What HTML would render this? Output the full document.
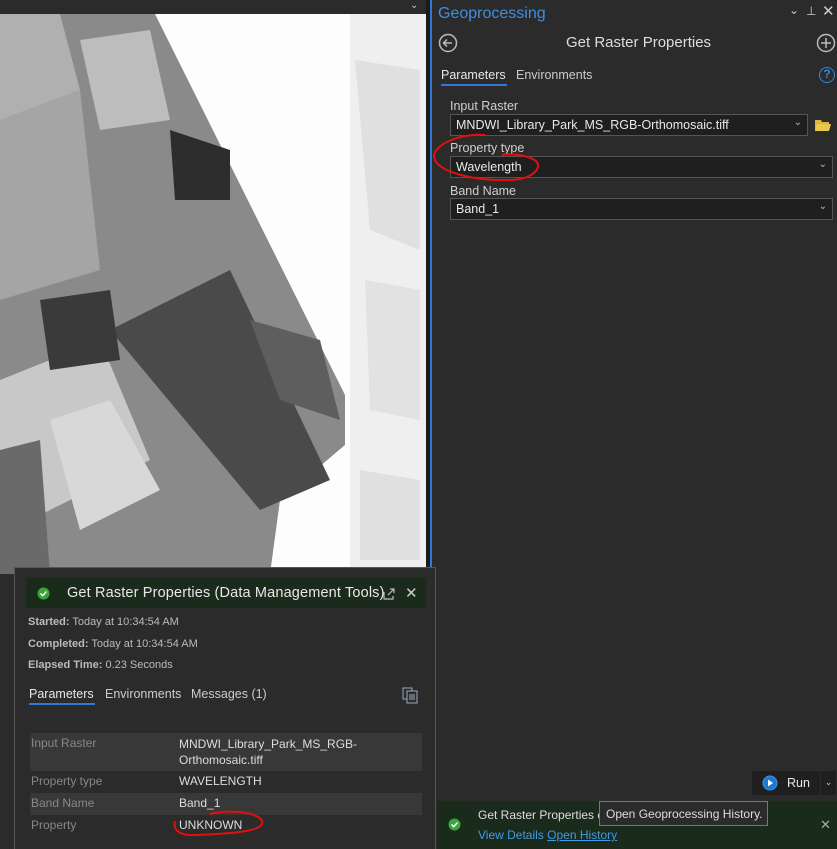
<!DOCTYPE html>
<html><head><meta charset="utf-8"><style>
*{margin:0;padding:0;box-sizing:border-box}
body{width:837px;height:849px;overflow:hidden;background:#2b2b2b;font-family:"Liberation Sans",sans-serif;position:relative;color:#ddd}
.abs{position:absolute}
.field{position:absolute;background:#1f1f1f;border:1px solid #555;height:22px;font-size:12.5px;color:#e8e8e8;padding:3px 5px;}
.chev{position:absolute;right:5px;top:2px;font-size:10px;color:#bbb}
.lbl{position:absolute;font-size:12.5px;color:#cfcfcf}
</style></head><body>
<div class="abs" style="left:0;top:0;width:428px;height:14px;background:#2b2b2b"></div>
<div class="abs" style="left:410px;top:0;font-size:10px;color:#ccc">⌄</div>
<svg class="abs" style="left:0;top:14px" width="426" height="560" viewBox="0 14 426 560">
<rect x="0" y="14" width="426" height="560" fill="#fdfdfd"/>
<rect x="350" y="14" width="76" height="560" fill="#efefef"/>
<polygon points="355,60 420,70 420,250 370,230" fill="#e0e0e0"/>
<polygon points="365,280 420,290 420,420 370,410" fill="#e2e2e2"/>
<polygon points="360,470 420,480 420,560 360,560" fill="#e0e0e0"/>
<polygon points="0,14 155,14 345,395 345,445 280,500 270,574 0,574" fill="#8a8a8a"/>
<polygon points="0,14 60,14 80,90 0,120" fill="#b0b0b0"/>
<polygon points="0,120 80,90 100,270 0,300" fill="#a5a5a5"/>
<polygon points="110,330 230,270 330,480 260,510" fill="#4a4a4a"/>
<polygon points="170,130 230,150 230,200 175,200" fill="#2d2d2d"/>
<polygon points="0,380 100,340 150,460 30,520 0,520" fill="#c8c8c8"/>
<polygon points="50,420 110,400 160,490 80,530" fill="#d8d8d8"/>
<polygon points="0,450 40,440 50,574 0,574" fill="#6a6a6a"/>
<polygon points="80,40 150,30 170,120 100,130" fill="#bdbdbd"/>
<polygon points="40,300 110,290 120,360 50,370" fill="#3a3a3a"/>
<polygon points="250,320 320,340 340,420 280,400" fill="#5e5e5e"/>
</svg>
<div class="abs" style="left:426px;top:0;width:4px;height:849px;background:#1a1a1a"></div>
<div class="abs" style="left:430px;top:0;width:2px;height:849px;background:#2c7ad6"></div>
<div class="abs" style="left:438px;top:5px;font-size:16px;color:#3f8fe0">Geoprocessing</div>
<div class="abs" style="left:789px;top:3px;font-size:12px;color:#ccc">⌄</div>
<div class="abs" style="left:806px;top:4px;font-size:12px;color:#ccc">⊥</div>
<div class="abs" style="left:822px;top:2px;font-size:15px;color:#ccc">✕</div>
<svg class="abs" style="left:438px;top:33px" width="20" height="20"><circle cx="10" cy="10" r="8.5" fill="none" stroke="#bbb" stroke-width="1.5"/><path d="M14 10H6M9 6.5L5.5 10 9 13.5" fill="none" stroke="#bbb" stroke-width="1.5"/></svg>
<div class="abs" style="left:566px;top:34px;font-size:15px;color:#ddd">Get Raster Properties</div>
<svg class="abs" style="left:816px;top:33px" width="20" height="20"><circle cx="10" cy="10" r="8.5" fill="none" stroke="#bbb" stroke-width="1.5"/><path d="M10 5V15M5 10H15" stroke="#bbb" stroke-width="1.5"/></svg>
<div class="abs" style="left:441px;top:68px;font-size:12.5px;color:#e8e8e8">Parameters</div>
<div class="abs" style="left:441px;top:84px;width:66px;height:2px;background:#2c7ad6"></div>
<div class="abs" style="left:516px;top:68px;font-size:12.5px;color:#ccc">Environments</div>
<div class="abs" style="left:819px;top:67px;width:16px;height:16px;border-radius:50%;border:1.5px solid #2c8ae6;color:#2c8ae6;font-size:12px;font-weight:bold;text-align:center;line-height:13px">?</div>
<div class="lbl" style="left:450px;top:99px">Input Raster</div>
<div class="field" style="left:450px;top:114px;width:358px">MNDWI_Library_Park_MS_RGB-Orthomosaic.tiff<span class="chev">⌄</span></div>
<svg class="abs" style="left:814px;top:118px" width="18" height="14"><path d="M1 2H7L8 4H15V13H1Z" fill="#d8b640"/><path d="M3 6H17L15 13H1Z" fill="#e8c84a"/></svg>
<div class="lbl" style="left:450px;top:141px">Property type</div>
<div class="field" style="left:450px;top:156px;width:383px">Wavelength<span class="chev">⌄</span></div>
<div class="lbl" style="left:450px;top:184px">Band Name</div>
<div class="field" style="left:450px;top:198px;width:383px">Band_1<span class="chev">⌄</span></div>
<svg class="abs" style="left:430px;top:125px" width="115" height="60"><path d="M55 10C30 8 3 20 4 32 6 46 40 56 80 55 105 54 112 42 106 36 98 30 80 28 72 30" fill="none" stroke="#e01010" stroke-width="2"/></svg>
<div class="abs" style="left:752px;top:771px;width:68px;height:24px;background:#1f1f1f;border-radius:2px"></div>
<svg class="abs" style="left:762px;top:775px" width="16" height="16"><circle cx="8" cy="8" r="7" fill="#1e78d0" stroke="#3a94f0"/><path d="M6 4.5L11 8 6 11.5Z" fill="#fff"/></svg>
<div class="abs" style="left:787px;top:776px;font-size:12.5px;color:#e8e8e8">Run</div>
<div class="abs" style="left:821px;top:771px;width:15px;height:24px;background:#1f1f1f;font-size:9px;color:#ccc;text-align:center;line-height:22px">⌄</div>
<div class="abs" style="left:437px;top:801px;width:400px;height:48px;background:#1b2b1b"></div>
<svg class="abs" style="left:448px;top:818px" width="13" height="13"><circle cx="6.5" cy="6.5" r="6" fill="#3da33d"/><path d="M3.5 6.5L5.7 8.7 9.5 4.5" fill="none" stroke="#fff" stroke-width="1.5"/></svg>
<div class="abs" style="left:478px;top:808px;font-size:12px;color:#ddd">Get Raster Properties co</div>
<div class="abs" style="left:478px;top:828px;font-size:12px;color:#3f9ae8">View Details <u> Open History</u></div>
<div class="abs" style="left:820px;top:817px;font-size:13px;color:#aaa">✕</div>
<div class="abs" style="left:599px;top:801px;width:169px;height:25px;background:#2b2b2b;border:1px solid #777;font-size:12px;color:#ddd;padding:5px 6px;white-space:nowrap;overflow:hidden">Open Geoprocessing History.</div>
<div class="abs" style="left:14px;top:567px;width:422px;height:282px;background:#2b2b2b;border:1px solid #555;border-bottom:none"></div>
<div class="abs" style="left:26px;top:578px;width:400px;height:30px;background:#1b2b1b"></div>
<svg class="abs" style="left:37px;top:587px" width="13" height="13"><circle cx="6.5" cy="6.5" r="6" fill="#3da33d"/><path d="M3.5 6.5L5.7 8.7 9.5 4.5" fill="none" stroke="#fff" stroke-width="1.5"/></svg>
<div class="abs" style="left:67px;top:585px;font-size:14.5px;color:#e8e8e8;white-space:nowrap;letter-spacing:0.15px">Get Raster Properties (Data Management Tools)</div>
<svg class="abs" style="left:382px;top:587px" width="14" height="14"><path d="M2 5V12H11V9M6 8L12 2M8 2H12V6" fill="none" stroke="#bbb" stroke-width="1.2"/></svg>
<div class="abs" style="left:405px;top:584px;font-size:15px;color:#ccc">✕</div>
<div class="abs" style="left:28px;top:616px;font-size:11px;color:#bbb"><b>Started:</b> Today at 10:34:54 AM</div>
<div class="abs" style="left:28px;top:638px;font-size:11px;color:#bbb"><b>Completed:</b> Today at 10:34:54 AM</div>
<div class="abs" style="left:28px;top:659px;font-size:11px;color:#bbb"><b>Elapsed Time:</b> 0.23 Seconds</div>
<div class="abs" style="left:29px;top:687px;font-size:12.5px;color:#e8e8e8">Parameters</div>
<div class="abs" style="left:29px;top:703px;width:66px;height:2px;background:#2c7ad6"></div>
<div class="abs" style="left:105px;top:687px;font-size:12.5px;color:#ccc">Environments</div>
<div class="abs" style="left:191px;top:687px;font-size:12.5px;color:#ccc">Messages (1)</div>
<svg class="abs" style="left:402px;top:687px" width="16" height="17"><rect x="1" y="1" width="9" height="11" fill="none" stroke="#9ab" stroke-width="1"/><rect x="5" y="4" width="10" height="12" fill="#2b2b2b" stroke="#9ab" stroke-width="1"/><path d="M7 8H13M7 10H13M7 12H13" stroke="#9ab"/></svg>
<div class="abs" style="left:30px;top:733px;width:392px;height:38px;background:#383838"></div>
<div class="abs" style="left:30px;top:793px;width:392px;height:22px;background:#383838"></div>
<div class="abs" style="left:31px;top:736px;font-size:12px;color:#888">Input Raster</div>
<div class="abs" style="left:179px;top:736px;font-size:12px;color:#ddd;line-height:16px">MNDWI_Library_Park_MS_RGB-<br>Orthomosaic.tiff</div>
<div class="abs" style="left:31px;top:774px;font-size:12px;color:#888">Property type</div>
<div class="abs" style="left:179px;top:774px;font-size:12px;color:#ddd">WAVELENGTH</div>
<div class="abs" style="left:31px;top:796px;font-size:12px;color:#888">Band Name</div>
<div class="abs" style="left:179px;top:796px;font-size:12px;color:#ddd">Band_1</div>
<div class="abs" style="left:31px;top:818px;font-size:12px;color:#888">Property</div>
<div class="abs" style="left:179px;top:818px;font-size:12px;color:#ddd">UNKNOWN</div>
<svg class="abs" style="left:165px;top:806px" width="105" height="35"><path d="M45 8C70 2 100 8 97 18 94 26 60 28 30 29 12 30 8 22 10 15" fill="none" stroke="#e01010" stroke-width="2"/></svg>
</body></html>
